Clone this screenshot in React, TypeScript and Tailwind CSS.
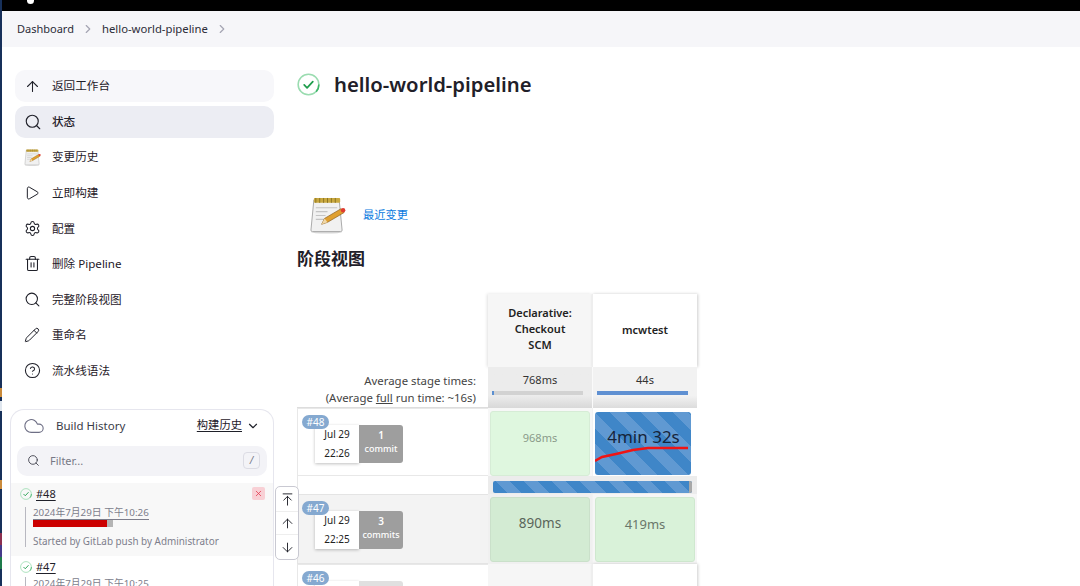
import { ArrowDown, ArrowUp, ArrowUpToLine, ChevronDown, ChevronRight, CircleHelp, Cloud, Play, Search, Settings, Trash2, Pencil, X } from "lucide-react";
import type { ReactNode } from "react";

const FONT = "font-['Noto_Sans','Noto_Sans_CJK_SC',sans-serif]";

function Notepad({ size }: { size: number }) {
  return (
    <svg width={size} height={size} viewBox="0 0 36 38">
      <ellipse cx="17" cy="36" rx="16" ry="1.6" fill="#d8d8d8" />
      <path d="M4 3h26l3 31a1.5 1.5 0 0 1-1.5 1.5H2.5A1.5 1.5 0 0 1 1 34z" fill="#f1f1f1" stroke="#a9a9a9" />
      <rect x="4" y="1" width="27" height="5" rx="1" fill="#c9a83f" />
      <path d="M6 1v5M10 1v5M14 1v5M18 1v5M22 1v5M26 1v5" stroke="#8b7424" strokeWidth="1" />
      <path d="M6 11h22M6 15h12M6 19h10M6 23h14" stroke="#c4c4c4" strokeWidth="1.2" />
      <path d="M12 28l3-6L32 12l3 4-17 10z" fill="#e0a030" stroke="#8a5a14" strokeWidth="0.7" />
      <path d="M12 28l3-6 3 4z" fill="#f0d8a8" />
      <circle cx="34" cy="13.5" r="2.3" fill="#df3b30" />
    </svg>
  );
}

function CheckRing({ size }: { size: number }) {
  return (
    <svg width={size} height={size} viewBox="0 0 24 24" fill="none">
      <circle cx="12" cy="12" r="10.8" stroke="#9adcb0" strokeWidth="1.6" />
      <path d="M20 19.5A10.8 10.8 0 0 0 22.8 12" stroke="#3fb56a" strokeWidth="1.6" />
      <path d="M7.5 12.5l3 3 6-6.5" stroke="#1f9d4c" strokeWidth="1.8" strokeLinecap="round" strokeLinejoin="round" />
    </svg>
  );
}

function NavItem({ icon, label, cls = "" }: { icon: ReactNode; label: string; cls?: string }) {
  return (
    <div className={`flex h-[32px] items-center rounded-[10px] pl-[9px] text-[11.6px] text-[#1f2029] ${cls}`}>
      <span className="flex w-[28px] items-center">{icon}</span>
      <span>{label}</span>
    </div>
  );
}

function BuildCard({ num, day, time, count, word, muted }: { num: string; day: string; time: string; count: string; word: string; muted?: boolean }) {
  return (
    <div className="relative ml-[4px] h-full">
      <span className="absolute left-0 top-[6px] z-10 flex h-[14px] w-[27px] items-center justify-center rounded-full bg-[#85a9d0] text-[10px] text-white">{num}</span>
      <div className="absolute left-[13px] top-[16px] flex h-[38px] w-[88px] text-[10px]">
        <div className="flex w-[44px] flex-col items-center justify-between bg-white py-[2px] leading-[15px] text-[#222] shadow-[0_1px_3px_rgba(0,0,0,0.25)]">
          <span>{day}</span>
          <span>{time}</span>
        </div>
        <div className={`flex w-[44px] flex-col items-center justify-center rounded-r-[3px] pb-[5px] text-center text-[9px] font-medium leading-[14px] ${muted ? "bg-[#e0e0e0] text-[#888]" : "bg-[#9e9e9e] text-white"}`}>
          <span className="text-[10px] font-semibold">{count}</span>
          <span>{word}</span>
        </div>
      </div>
    </div>
  );
}

export default function App() {
  return (
    <div className={`flex h-[586px] w-[1080px] overflow-hidden bg-white ${FONT}`}>
      {/* desktop peeking in on the left */}
      <div className="flex w-[2px] shrink-0 flex-col bg-[#17305a]">
        <div className="mt-[388px] h-[9px] bg-[#c98a3a]" />
        <div className="mt-[4px] h-[10px] bg-[#dfe6ee]" />
        <div className="mt-[69px] h-[9px] bg-[#c98a3a]" />
        <div className="mt-[44px] h-[12px] bg-[#8c2f4f]" />
        <div className="h-[12px] bg-[#453a8a]" />
        <div className="h-[12px] bg-[#1e7a4a]" />
      </div>

      <div className="flex min-w-0 flex-1 flex-col">
        <div className="flex h-[11px] shrink-0 bg-black pl-[25px]">
          <div className="h-[4px] w-[7px] rounded-b-full bg-white" />
        </div>
        <div className="flex h-[36px] shrink-0 items-center bg-[#f6f6f9] pl-[15px] text-[11px] text-[#2c2d38]">
          <span>Dashboard</span>
          <ChevronRight className="mx-[7px] text-[#a5a5b3]" size={14} />
          <span className="text-[11.3px]">hello-world-pipeline</span>
          <ChevronRight className="mx-[7px] text-[#a5a5b3]" size={14} />
        </div>

        <div className="flex min-h-0 flex-1">
          <aside className="relative w-[272px] shrink-0 pt-[23px]">
            <div className="ml-[13px] flex w-[259px] flex-col gap-[3.6px]">
              <NavItem icon={<ArrowUp size={17} strokeWidth={1.5} />} label="返回工作台" cls="h-[31px] bg-[#f7f7fa]" />
              <NavItem icon={<Search size={18} strokeWidth={1.5} />} label="状态" cls="bg-[#ecedf3] font-medium" />
              <NavItem icon={<Notepad size={17} />} label="变更历史" />
              <NavItem icon={<Play size={16} strokeWidth={1.5} />} label="立即构建" />
              <NavItem icon={<Settings size={17} strokeWidth={1.5} />} label="配置" />
              <NavItem icon={<Trash2 size={17} strokeWidth={1.5} />} label="删除 Pipeline" />
              <NavItem icon={<Search size={17} strokeWidth={1.5} />} label="完整阶段视图" />
              <NavItem icon={<Pencil size={16} strokeWidth={1.5} />} label="重命名" />
              <NavItem icon={<CircleHelp size={17} strokeWidth={1.5} />} label="流水线语法" />
            </div>

            <div className="ml-[8px] mt-[22px] h-[200px] w-[264px] rounded-t-[14px] border border-b-0 border-[#e6e6ee]">
              <div className="flex h-[36px] items-center pb-[4px] pl-[12px] pr-[13px] text-[11.5px] text-[#3b3c48]">
                <Cloud size={22} strokeWidth={1.2} className="text-[#6e6f85]" />
                <span className="ml-[11px]">Build History</span>
                <span className="ml-auto text-[11.3px] text-[#1f2029] underline underline-offset-2">构建历史</span>
                <ChevronDown size={14} className="ml-[4px] text-[#1f2029]" />
              </div>
              <div className="mx-[6px] flex h-[30px] items-center rounded-[10px] bg-[#f3f3f7] pl-[10px] pr-[7px] text-[11px] text-[#777886]">
                <Search size={13} strokeWidth={1.6} className="text-[#3b3c48]" />
                <span className="ml-[10px]">Filter...</span>
                <span className="ml-auto flex h-[17px] w-[17px] items-center justify-center rounded-[4px] border border-[#dcdce4] text-[10px] italic">/</span>
              </div>
              <div className="relative mt-[7px] h-[73px] bg-[#f8f8f8] pl-[9px] pt-[3px]">
                <div className="flex items-center gap-[4px] text-[11px] text-[#1f2029]">
                  <CheckRing size={12} />
                  <span className="underline underline-offset-2">#48</span>
                </div>
                <button className="absolute right-[8px] top-[4px] flex h-[13px] w-[13px] items-center justify-center rounded-[2px] bg-[#f8d0d5] text-[#e0354a]">
                  <X size={9} />
                </button>
                <div className="ml-[5px] mt-[5px] h-[40px] border-l border-[#b8b8c0] pl-[7px] text-[9.9px] leading-[14px] text-[#7c7d8b]">
                  <div className="w-fit border-b border-[#7c7d8b] text-[9.8px] leading-[12px]">2024年7月29日 下午10:26</div>
                  <div className="flex h-[7px] w-[80px] bg-[#b4b4b4]">
                    <div className="w-[74px] bg-[#cc0000]" />
                  </div>
                  <div className="mt-[7px] whitespace-nowrap">Started by GitLab push by Administrator</div>
                </div>
              </div>
              <div className="pl-[9px] pt-[3px]">
                <div className="flex items-center gap-[4px] text-[11px] text-[#1f2029]">
                  <CheckRing size={12} />
                  <span className="underline underline-offset-2">#47</span>
                </div>
                <div className="ml-[5px] mt-[2px] border-l border-[#b8b8c0] pl-[7px] text-[9.8px] leading-[13px] text-[#7c7d8b]">2024年7月29日 下午10:25</div>
              </div>
            </div>

            <div className="absolute left-[273px] top-[439px] z-20 flex h-[74px] w-[24px] flex-col items-center rounded-[5px] border border-[#c9c9d2] bg-white text-[#1f2029]">
              <div className="flex h-[24px] items-center"><ArrowUpToLine size={15} strokeWidth={1.5} /></div>
              <div className="flex h-[24px] w-full items-center justify-center border-y border-[#eeeeee]"><ArrowUp size={15} strokeWidth={1.5} /></div>
              <div className="flex h-[24px] items-center"><ArrowDown size={15} strokeWidth={1.5} /></div>
            </div>
          </aside>

          <main className="min-w-0 flex-1 pl-[23px] pt-[25px]">
            <div className="flex h-[24px] items-center">
              <CheckRing size={23} />
              <h1 className="ml-[14px] mt-[1px] text-[20.3px] font-semibold text-[#1f2029]">hello-world-pipeline</h1>
            </div>
            <div className="ml-[12px] mt-[100px] flex h-[38px] items-center">
              <Notepad size={37} />
              <a className="ml-[17px] text-[11.25px] text-[#0b7be0]">最近变更</a>
            </div>
            <h2 className="mt-[13px] h-[26px] text-[17px] font-semibold leading-[24px] text-[#1f2029]">阶段视图</h2>

            <div className="mt-[21px] grid w-[400px] grid-cols-[191px_104px_105px] grid-rows-[73px_41px_68px_18px_70px_40px] text-[#333]">
              {/* header */}
              <div />
              <div className="flex items-center justify-center bg-[#f6f6f6] px-[15px] pb-[3px] text-center text-[11px] font-semibold leading-[16px] text-[#222] shadow-[-1px_0_3px_rgba(0,0,0,0.12)]">Declarative: Checkout SCM</div>
              <div className="flex items-center justify-center border-l border-[#eeeeee] bg-white text-[11px] font-semibold text-[#222] shadow-[1px_0_3px_rgba(0,0,0,0.2)]">mcwtest</div>

              {/* averages */}
              <div className="border-b border-[#dddddd] pr-[12px] pt-[5px] text-right text-[11.4px] leading-[17px] text-[#444]">
                <div>Average stage times:</div>
                <div>(Average <span className="underline">full</span> run time: ~16s)</div>
              </div>
              <div className="bg-gradient-to-b from-[#ececec] from-70% to-[#d8d8d8] px-[4px] pt-[5px] text-center text-[11px]">
                <div>768ms</div>
                <div className="mt-[2px] h-[4px] w-[91px] bg-[#d2d2d2]"><div className="h-full w-[2px] bg-[#5b8fd0]" /></div>
              </div>
              <div className="border-l border-[#fafafa] bg-gradient-to-b from-[#f2f2f2] from-70% to-[#dcdcdc] px-[4px] pt-[5px] text-center text-[11px]">
                <div>44s</div>
                <div className="mt-[2px] h-[4px] w-[91px] bg-[#5f90d2]" />
              </div>

              {/* build 48 */}
              <div className="border-y border-l border-[#e8e8e8] bg-white"><BuildCard num="#48" day="Jul 29" time="22:26" count="1" word="commit" /></div>
              <div className="bg-[#f7f7f7] px-[2px] pt-[3px]">
                <div className="flex h-[65px] items-center justify-center rounded-[3px] border border-[#d6ecd6] bg-[#dff7df] pb-[11px] text-[11px] text-[#8a9a8a]">968ms</div>
              </div>
              <div className="border-l border-[#f2f2f2] bg-white pl-[2px] pr-[6px] pt-[4px]">
                <div className="relative flex h-[63px] items-center justify-center rounded-[3px] bg-[repeating-linear-gradient(45deg,#3f86c8_0,#3f86c8_11px,#6099d2_11px,#6099d2_22px)] pb-[13px] pl-[1px] text-[17px] text-[#16243a]">
                  4min 32s
                  <svg className="absolute left-0 top-0" width="96" height="63" fill="none">
                    <path d="M0 49l7-4 14-3 17-4 15-2h40" stroke="#f01414" strokeWidth="2.5" />
                  </svg>
                </div>
              </div>

              {/* running bar */}
              <div className="border-l border-[#e8e8e8]" />
              <div className="col-span-2 bg-[#ececec] px-[5px] pt-[5px]">
                <div className="flex h-[12px] rounded-[2px] bg-[repeating-linear-gradient(45deg,#3f86c8_0,#3f86c8_10px,#6099d2_10px,#6099d2_20px)]">
                  <div className="ml-auto h-full w-[3px] rounded-r-[2px] bg-[#a8a8a8]" />
                </div>
              </div>

              {/* build 47 */}
              <div className="border-y border-l border-[#e4e4e4] bg-[#f3f3f3]"><BuildCard num="#47" day="Jul 29" time="22:25" count="3" word="commits" /></div>
              <div className="bg-[#f0f0f0] px-[2px] pt-[3px]">
                <div className="flex h-[65px] items-center justify-center rounded-[3px] border border-[#cae0ca] bg-[#d3ebd3] pb-[12px] text-[13.5px] text-[#5a665a]">890ms</div>
              </div>
              <div className="border-l border-[#f2f2f2] bg-[#f6f6f6] pl-[2px] pr-[2px] pt-[3px]">
                <div className="flex h-[65px] items-center justify-center rounded-[3px] border border-[#cfe8cf] bg-[#d9f2d9] pb-[10px] text-[13px] text-[#6a776a]">419ms</div>
              </div>

              {/* build 46 */}
              <div className="border-l border-t border-[#e8e8e8] bg-white"><BuildCard num="#46" day="Jul 29" time="22:20" count="No" word="changes" muted /></div>
              <div className="bg-[#f6f6f6]" />
              <div className="border-l border-[#eeeeee] bg-white shadow-[1px_0_3px_rgba(0,0,0,0.2)]" />
            </div>
          </main>
        </div>
      </div>
    </div>
  );
}
